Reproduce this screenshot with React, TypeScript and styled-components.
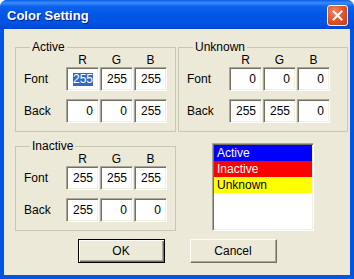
import styled, { createGlobalStyle } from 'styled-components'

const GlobalStyle = createGlobalStyle`
  html, body {
    margin: 0;
    padding: 0;
    background: #ffffff;
  }
  * {
    box-sizing: border-box;
  }
`

const Window = styled.div`
  width: 354px;
  height: 279px;
  display: flex;
  flex-direction: column;
  background: #0055e5;
  border-radius: 7px 7px 0 0;
  overflow: hidden;
  font-family: 'Liberation Sans', Arial, sans-serif;
  font-size: 12px;
  color: #000;
`

const TitleBar = styled.div`
  height: 29px;
  flex: none;
  display: flex;
  align-items: center;
  justify-content: space-between;
  padding: 0 6px 0 7px;
  background: linear-gradient(
    to bottom,
    #0a5fe8 0%,
    #3a8cfb 10%,
    #0d62ec 22%,
    #0056e6 50%,
    #0054e3 80%,
    #0046d2 100%
  );
`

const Title = styled.span`
  color: #ffffff;
  font-weight: bold;
  font-size: 13px;
  text-shadow: 1px 1px 0 #0a1f8a;
  margin-top: 1px;
`

const CloseButton = styled.div`
  width: 21px;
  height: 21px;
  border: 1px solid #ffffff;
  border-radius: 3px;
  background: radial-gradient(circle at 35% 30%, #f08a6a 0%, #e2582f 45%, #c23a14 100%);
  display: flex;
  align-items: center;
  justify-content: center;
  margin-top: 2px;
`

const Client = styled.div`
  flex: 1;
  margin: 0 4px 4px;
  background: #ece9d8;
  padding: 11px 0 0 11px;
  display: flex;
  flex-direction: column;
`

const Row = styled.div<{ $top?: number; $align?: string }>`
  display: flex;
  align-items: ${(p) => p.$align || 'flex-start'};
  gap: 2px;
  margin-top: ${(p) => p.$top || 0}px;
`

const Group = styled.fieldset<{ $width: number }>`
  margin: 0;
  width: ${(p) => p.$width}px;
  padding: 0 0 8px 8px;
  border: 1px solid #c9c6b4;
  min-width: 0;
`

const Legend = styled.legend`
  padding: 0 2px;
  margin-left: 6px;
  line-height: 14px;
  font-size: 12px;
`

const Grid = styled.div`
  display: grid;
  grid-template-columns: 41px repeat(3, 33px);
  grid-template-rows: 13px 32px 24px;
  column-gap: 1px;
  align-items: start;
`

const ColHead = styled.div`
  text-align: center;
  line-height: 13px;
`

const RowLabel = styled.div`
  line-height: 14px;
  height: 24px;
  display: flex;
  align-items: center;
`

const Edit = styled.div`
  height: 24px;
  background: #ffffff;
  border: 1px solid;
  border-color: #aca899 #ffffff #ffffff #aca899;
  box-shadow: inset 1px 1px 0 #716f64, inset -1px -1px 0 #f1efe2;
  display: flex;
  align-items: center;
  justify-content: flex-end;
  padding-right: 5px;
  line-height: 13px;
`

const Selected = styled.span`
  background: #316ac5;
  color: #ffffff;
`

const ListBox = styled.div`
  width: 102px;
  height: 88px;
  margin-left: 34px;
  background: #ffffff;
  border: 1px solid;
  border-color: #aca899 #ffffff #ffffff #aca899;
  box-shadow: inset 1px 1px 0 #716f64, inset -1px -1px 0 #f1efe2;
  padding: 1px 1px 0 1px;
`

const ListItem = styled.div<{ $bg: string; $fg: string }>`
  height: 16px;
  line-height: 16px;
  padding-left: 3px;
  background: ${(p) => p.$bg};
  color: ${(p) => p.$fg};
`

const ButtonRow = styled.div`
  display: flex;
  justify-content: center;
  gap: 25px;
  margin: 8px 0 0 -11px;
`

const Button = styled.div<{ $default?: boolean }>`
  width: 87px;
  height: 24px;
  display: flex;
  align-items: center;
  justify-content: center;
  background: #ece9d8;
  border: 1px solid;
  border-color: ${(p) => (p.$default ? '#000000' : '#ffffff #716f64 #716f64 #ffffff')};
  box-shadow: ${(p) =>
    p.$default
      ? 'inset 1px 1px 0 #ffffff, inset -1px -1px 0 #716f64, inset -2px -2px 0 #aca899'
      : 'inset -1px -1px 0 #aca899'};
`

type ColorGroupProps = {
  title: string
  width: number
  font: number[]
  back: number[]
  selectFirst?: boolean
}

function ColorGroup({ title, width, font, back, selectFirst }: ColorGroupProps) {
  return (
    <Group $width={width}>
      <Legend>{title}</Legend>
      <Grid>
        <div />
        <ColHead>R</ColHead>
        <ColHead>G</ColHead>
        <ColHead>B</ColHead>
        <RowLabel>Font</RowLabel>
        {font.map((v, i) => (
          <Edit key={`font-${i}`}>
            {selectFirst && i === 0 ? <Selected>{v}</Selected> : v}
          </Edit>
        ))}
        <RowLabel>Back</RowLabel>
        {back.map((v, i) => (
          <Edit key={`back-${i}`}>{v}</Edit>
        ))}
      </Grid>
    </Group>
  )
}

export default function App() {
  return (
    <>
      <GlobalStyle />
      <Window>
        <TitleBar>
          <Title>Color Setting</Title>
          <CloseButton>
            <svg width="11" height="11" viewBox="0 0 11 11">
              <path d="M1.5 1.5 L9.5 9.5 M9.5 1.5 L1.5 9.5" stroke="#ffffff" strokeWidth="2" strokeLinecap="square" />
            </svg>
          </CloseButton>
        </TitleBar>
        <Client>
          <Row>
            <ColorGroup title="Active" width={161} font={[255, 255, 255]} back={[0, 0, 255]} selectFirst />
            <ColorGroup title="Unknown" width={170} font={[0, 0, 0]} back={[255, 255, 0]} />
          </Row>
          <Row $top={7} $align="flex-end">
            <ColorGroup title="Inactive" width={161} font={[255, 255, 255]} back={[255, 0, 0]} />
            <ListBox>
              <ListItem $bg="#0000ff" $fg="#ffffff">Active</ListItem>
              <ListItem $bg="#ff0000" $fg="#ffffff">Inactive</ListItem>
              <ListItem $bg="#ffff00" $fg="#000000">Unknown</ListItem>
            </ListBox>
          </Row>
          <ButtonRow>
            <Button $default>OK</Button>
            <Button>Cancel</Button>
          </ButtonRow>
        </Client>
      </Window>
    </>
  )
}
